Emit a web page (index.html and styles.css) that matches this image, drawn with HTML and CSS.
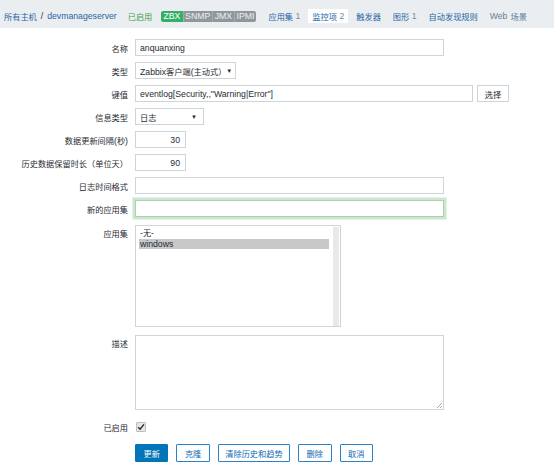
FILE: index.html
```html
<!DOCTYPE html>
<html lang="zh">
<head>
<meta charset="utf-8">
<title>监控项</title>
<link rel="stylesheet" href="styles.css">
</head>
<body>
<div class="header">
  <a class="link zh">所有主机</a>
  <span class="sep">/</span>
  <a class="link">devmanageserver</a>
  <span class="status zh">已启用</span>
  <span class="badges">
    <span class="badge green">ZBX</span><span class="badge">SNMP</span><span class="badge">JMX</span><span class="badge">IPMI</span>
  </span>
  <nav class="tabs">
    <a class="tab"><span class="zh">应用集</span><span class="count">1</span></a>
    <a class="tab active"><span class="zh">监控项</span><span class="count">2</span></a>
    <a class="tab"><span class="zh">触发器</span></a>
    <a class="tab"><span class="zh">图形</span><span class="count">1</span></a>
    <a class="tab"><span class="zh">自动发现规则</span></a>
    <a class="tab muted"><span>Web</span><span class="zh gap">场景</span></a>
  </nav>
</div>

<form class="form">
  <div class="row">
    <label class="lbl zh">名称</label>
    <div class="input w-wide">anquanxing</div>
  </div>
  <div class="row">
    <label class="lbl zh">类型</label>
    <div class="select w-type"><span>Zabbix<span class="zh">客户端</span>(<span class="zh">主动式）</span></span><span class="arrow">▼</span></div>
  </div>
  <div class="row">
    <label class="lbl zh">键值</label>
    <div class="input w-key">eventlog[Security,,"Warning|Error"]</div>
    <button type="button" class="btn-gray zh">选择</button>
  </div>
  <div class="row">
    <label class="lbl zh">信息类型</label>
    <div class="select w-info"><span class="zh">日志</span><span class="arrow">▼</span></div>
  </div>
  <div class="row">
    <label class="lbl"><span class="zh">数据更新间隔</span>(<span class="zh">秒</span>)</label>
    <div class="input num">30</div>
  </div>
  <div class="row">
    <label class="lbl zh">历史数据保留时长（单位天）</label>
    <div class="input num">90</div>
  </div>
  <div class="row">
    <label class="lbl zh">日志时间格式</label>
    <div class="input w-wide"></div>
  </div>
  <div class="row">
    <label class="lbl zh">新的应用集</label>
    <div class="input w-wide focus"></div>
  </div>
  <div class="row top listrow">
    <label class="lbl zh">应用集</label>
    <div class="listbox">
      <div class="options">
        <div class="opt">-<span class="zh">无</span>-</div>
        <div class="opt sel">windows</div>
      </div>
      <div class="scroll"></div>
    </div>
  </div>
  <div class="row top textrow">
    <label class="lbl zh">描述</label>
    <div class="textarea"><span class="grip"></span></div>
  </div>
  <div class="row checkrow">
    <label class="lbl zh">已启用</label>
    <span class="checkbox"><svg width="8" height="8" viewBox="0 0 8 8"><path d="M1.2 4.2 L3.1 6.2 L6.9 1.4" fill="none" stroke="#2a2a2a" stroke-width="1.4"/></svg></span>
  </div>
  <div class="row buttons">
    <span class="lbl"></span>
    <button type="button" class="btn primary zh">更新</button>
    <button type="button" class="btn zh">克隆</button>
    <button type="button" class="btn zh long">清除历史和趋势</button>
    <button type="button" class="btn zh">删除</button>
    <button type="button" class="btn zh">取消</button>
  </div>
</form>
</body>
</html>
```

FILE: styles.css
```css
body {
  margin: 0;
  background: #fff;
  font-family: "Liberation Sans", "Noto Sans CJK SC", sans-serif;
  font-size: 8.7px;
  color: #1f2c33;
}

.zh { font-size: 8.2px; }

.header {
  box-sizing: border-box;
  height: 28px;
  padding: 4px 0 0 4px;
  background: #ebeef0;
  display: flex;
  align-items: center;
  white-space: nowrap;
}

.link { color: #1f65a6; }
.sep { color: #1f2c33; margin: 0 4px 0 4px; }
.status { color: #429e47; margin-left: 11px; }

.badges {
  display: flex;
  margin-left: 9px;
  border-radius: 2px;
  overflow: hidden;
  height: 11px;
}
.badge {
  background: #8f979b;
  color: #eef1f2;
  line-height: 11px;
  padding: 0 2px 0 1.5px;
  border-left: 1px solid #a4abae;
}
.badge.green {
  background: #34af67;
  color: #fff;
  border-left: none;
  padding: 0 2.2px;
}

.tabs {
  display: flex;
  margin-left: 8px;
  gap: 4px;
  height: 14px;
  align-items: stretch;
}
.tab {
  color: #1f65a6;
  padding: 0 4px;
  display: flex;
  align-items: center;
}
.tab.active { background: #fff; }
.tab.muted { color: #5f7f98; }
.count { color: #768d99; margin-left: 2.5px; }
.gap { margin-left: 3px; }

.form {
  display: flex;
  flex-direction: column;
  gap: 6px;
  padding-top: 11px;
}

.row {
  display: flex;
  align-items: center;
  height: 17px;
}
.row.top { align-items: flex-start; height: auto; }

.lbl {
  width: 128px;
  flex: none;
  text-align: right;
  margin-right: 7px;
  white-space: nowrap;
}
.row.top .lbl { padding-top: 2px; }

.input, .select {
  box-sizing: border-box;
  height: 17px;
  border: 1px solid #cdd5d9;
  background: #fff;
  padding: 0 4px;
  display: flex;
  align-items: center;
  white-space: nowrap;
}
.w-wide { width: 309px; }
.w-key { width: 338px; }
.w-type { width: 101px; }
.w-info { width: 69px; }
.num { width: 51px; justify-content: flex-end; padding-right: 5px; }

.input.focus {
  border-color: #b0ceb4;
  box-shadow: 0 0 0 2.5px #cbe7cf;
}

.select { justify-content: space-between; padding-right: 6px; }
.arrow { font-size: 6px; color: #1f2c33; }

.btn-gray {
  box-sizing: border-box;
  margin-left: 4px;
  height: 17px;
  width: 32px;
  padding: 0;
  border: 1px solid #cdd5d9;
  background: #fff;
  color: #1f2c33;
  font-family: inherit;
}

.listrow { margin-top: 2px; }
.listbox {
  box-sizing: border-box;
  width: 206px;
  height: 102px;
  border: 1px solid #cdd5d9;
  display: flex;
  padding: 2px 1px 1px 3px;
}
.options { flex: 1; }
.opt { line-height: 10px; padding-left: 1px; }
.opt.sel { background: #c8c8c8; }
.scroll { width: 6px; background: #e9e9e9; margin: -1px 0 -1px 4px; }

.textrow { margin-top: 2px; }
.textarea {
  box-sizing: border-box;
  position: relative;
  width: 309px;
  height: 75px;
  border: 1px solid #cdd5d9;
}
.grip {
  position: absolute;
  right: 1px;
  bottom: 1px;
  width: 5px;
  height: 5px;
  background: linear-gradient(135deg, transparent 45%, #9aa 45%, #9aa 55%, transparent 55%, transparent 75%, #9aa 75%, #9aa 85%, transparent 85%);
}

.checkrow { margin-top: 2px; }
.checkbox {
  box-sizing: border-box;
  width: 10px;
  height: 10px;
  margin-left: 1px;
  background: #e6e6e6;
  border: 1px solid #bdbdbd;
  border-radius: 1px;
  display: flex;
  align-items: center;
  justify-content: center;
}

.buttons { margin-top: 3px; height: 18px; gap: 0; }
.btn {
  box-sizing: border-box;
  height: 18px;
  padding: 0 7.5px;
  margin-right: 8px;
  border: 1px solid #2b83c6;
  border-radius: 1px;
  background: #fff;
  color: #0f67b1;
  font-family: inherit;
  min-width: 32px;
}
.btn.long { padding: 0 6.5px; }
.btn.primary {
  background: #0275b8;
  border-color: #0275b8;
  color: #fff;
}
```
